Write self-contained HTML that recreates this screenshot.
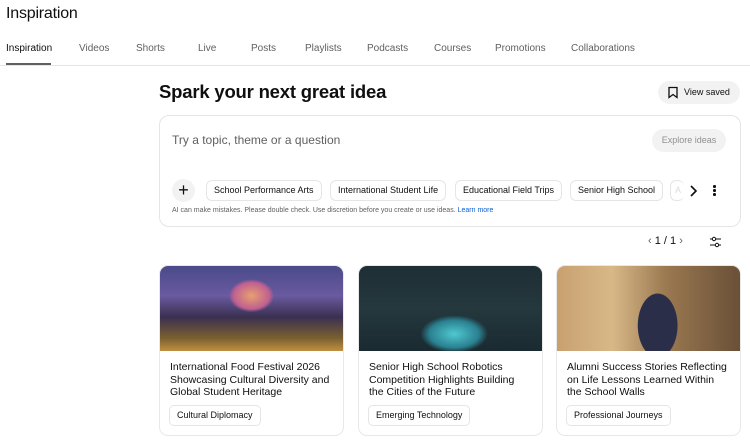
<!DOCTYPE html>
<html><head><meta charset="utf-8"><style>
*{box-sizing:border-box;margin:0;padding:0}
body{width:750px;height:441px;overflow:hidden;background:#fff;font-family:"Liberation Sans",sans-serif;color:#0f0f0f;position:relative}
.a{position:absolute}
h1{position:absolute;left:6px;top:5px;font-size:16px;font-weight:normal;letter-spacing:-.2px}
.tab{position:absolute;top:43px;font-size:10px;color:#606060}
.line{position:absolute;left:0;right:0;top:65px;height:1px;background:#e5e5e5}
.chip{position:absolute;top:180px;height:21px;border:1px solid #e5e5e5;border-radius:6px;font-size:9px;line-height:19px;padding:0 7px;color:#0f0f0f}
.card{position:absolute;top:265px;width:185px;height:171px;border:1px solid #e8e8e8;border-radius:9px;overflow:hidden;background:#fff}
.img{height:85px}
.t{position:absolute;left:10px;top:95px;width:175px;font-size:10.5px;line-height:12.7px;white-space:nowrap}
.tag{position:absolute;left:9px;top:139px;height:21px;border:1px solid #e5e5e5;border-radius:5px;font-size:9px;line-height:19px;padding:0 7px}
</style></head><body>
<h1>Inspiration</h1>
<div class="tab" style="left:6px;color:#0f0f0f">Inspiration</div>
<div class="a" style="left:6px;top:63px;width:45px;height:2px;background:#606060"></div>
<div class="tab" style="left:79px">Videos</div>
<div class="tab" style="left:136px">Shorts</div>
<div class="tab" style="left:198px">Live</div>
<div class="tab" style="left:251px">Posts</div>
<div class="tab" style="left:305px">Playlists</div>
<div class="tab" style="left:367px">Podcasts</div>
<div class="tab" style="left:434px">Courses</div>
<div class="tab" style="left:495px">Promotions</div>
<div class="tab" style="left:571px">Collaborations</div>
<div class="line"></div>
<div class="a" style="left:159px;top:81px;font-size:18.5px;font-weight:bold;letter-spacing:-.2px">Spark your next great idea</div>
<div class="a" style="left:658px;top:81px;width:82px;height:23px;border-radius:12px;background:#f2f2f2;font-size:9px;line-height:23px;padding-left:26px">View saved
<svg class="a" style="left:9px;top:5px" width="12" height="13" viewBox="0 0 12 13"><path d="M2 1.5h8v10l-4-3-4 3z" fill="none" stroke="#0f0f0f" stroke-width="1.3"/></svg></div>
<div class="a" style="left:159px;top:115px;width:582px;height:112px;border:1px solid #e5e5e5;border-radius:10px"></div>
<div class="a" style="left:172px;top:133px;font-size:12px;color:#606060">Try a topic, theme or a question</div>
<div class="a" style="left:652px;top:129px;width:74px;height:23px;border-radius:12px;background:#f2f2f2;font-size:9px;line-height:23px;text-align:center;color:#909090">Explore ideas</div>
<div class="a" style="left:172px;top:179px;width:23px;height:23px;border-radius:50%;background:#f2f2f2;text-align:center;font-size:18px;line-height:22px">+</div>
<div class="chip" style="left:206px">School Performance Arts</div>
<div class="chip" style="left:330px">International Student Life</div>
<div class="chip" style="left:455px">Educational Field Trips</div>
<div class="chip" style="left:570px">Senior High School</div>
<div class="chip" style="left:670px;width:14px;border-right:none;color:#ddd;padding:0 4px">A</div>
<svg class="a" style="left:688px;top:185px" width="10" height="12" viewBox="0 0 10 12"><path d="M3 1l5 5-5 5" fill="none" stroke="#0f0f0f" stroke-width="1.6"/></svg>
<div class="a" style="left:713px;top:185px;width:3px">
<div style="width:2.5px;height:2.5px;border-radius:50%;background:#0f0f0f;margin-bottom:1.5px"></div><div style="width:2.5px;height:2.5px;border-radius:50%;background:#0f0f0f;margin-bottom:1.5px"></div><div style="width:2.5px;height:2.5px;border-radius:50%;background:#0f0f0f"></div></div>
<div class="a" style="left:172px;top:207px;font-size:7px;color:#606060">AI can make mistakes. Please double check. Use discretion before you create or use ideas. <span style="color:#065fd4">Learn more</span></div>
<div class="a" style="left:648px;top:235px;font-size:11px;color:#606060">‹ <span style="color:#0f0f0f">1 / 1</span> ›</div>
<svg class="a" style="left:709px;top:236px" width="13" height="12" viewBox="0 0 13 12"><path d="M1 3h11M1 9h11" stroke="#0f0f0f" stroke-width="1"/><circle cx="5" cy="3" r="1.7" fill="#fff" stroke="#0f0f0f"/><circle cx="8" cy="9" r="1.7" fill="#fff" stroke="#0f0f0f"/></svg>

<div class="card" style="left:159px"><div class="img" style="background:radial-gradient(ellipse 30px 22px at 50% 35%,#e8a070,#c06090 60%,transparent 75%),linear-gradient(180deg,#4a4a8a 0%,#6a5aa0 35%,#3a3050 60%,#7a6030 85%,#c09040 100%)"></div>
<div class="t">International Food Festival 2026<br>Showcasing Cultural Diversity and<br>Global Student Heritage</div><div class="tag">Cultural Diplomacy</div></div>
<div class="card" style="left:358px"><div class="img" style="background:radial-gradient(ellipse 45px 25px at 52% 80%,#50c8d0,#2a8090 55%,transparent 75%),linear-gradient(180deg,#1e2e34 0%,#24383e 50%,#1a2a30 100%)"></div>
<div class="t">Senior High School Robotics<br>Competition Highlights Building<br>the Cities of the Future</div><div class="tag">Emerging Technology</div></div>
<div class="card" style="left:556px"><div class="img" style="background:radial-gradient(ellipse 28px 45px at 55% 70%,#2a2e48,#2a2e48 70%,transparent 72%),linear-gradient(90deg,#c8a070 0%,#d8b888 30%,#9a7850 60%,#6a5038 100%)"></div>
<div class="t">Alumni Success Stories Reflecting<br>on Life Lessons Learned Within<br>the School Walls</div><div class="tag">Professional Journeys</div></div>
</body></html>
